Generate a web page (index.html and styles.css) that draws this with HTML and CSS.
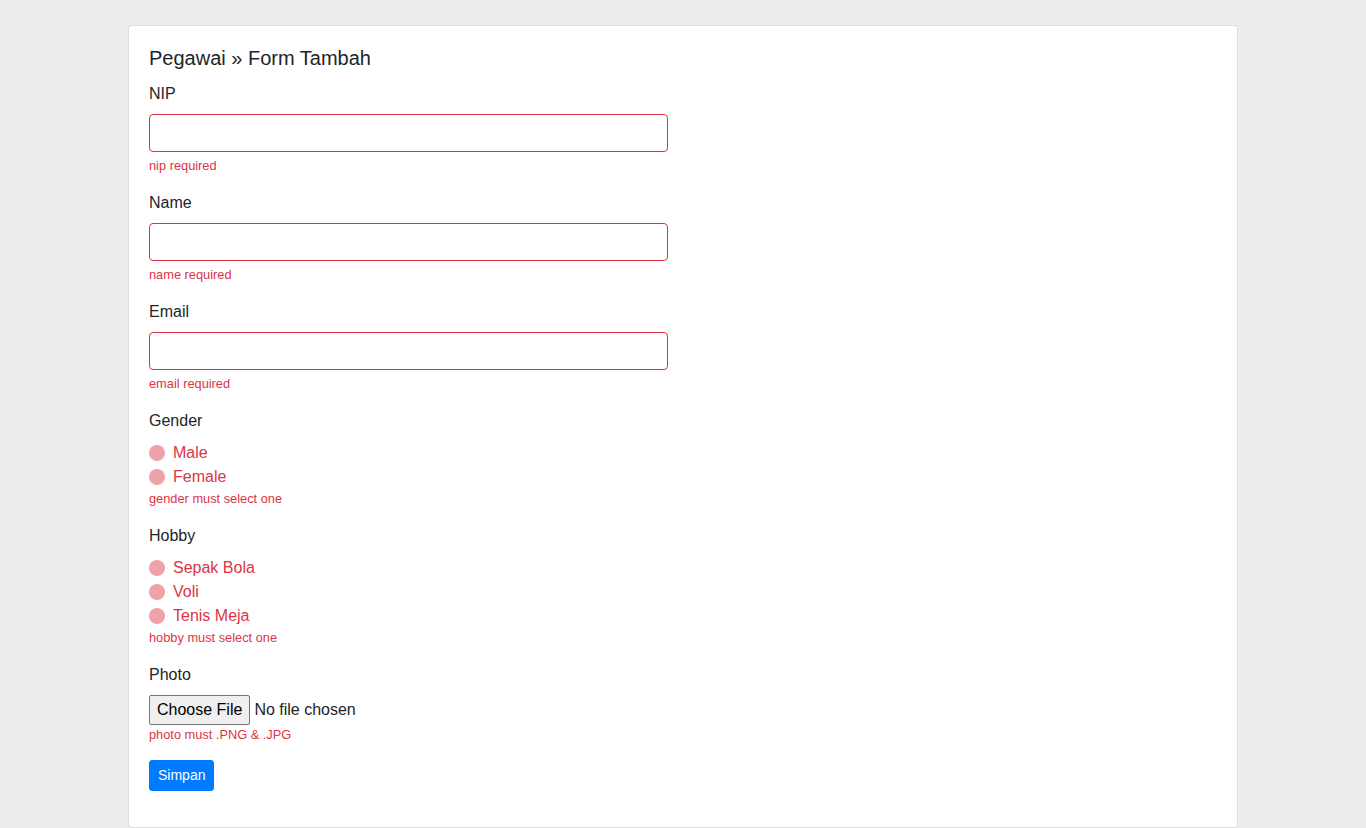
FILE: index.html
```html
<!DOCTYPE html>
<html lang="id">
<head>
<meta charset="utf-8">
<title>Pegawai » Form Tambah</title>
<link rel="stylesheet" href="styles.css">
</head>
<body>
<div class="container">
  <div class="card">
    <div class="card-body">
      <h5 class="card-title">Pegawai » Form Tambah</h5>
      <form class="form" onsubmit="return false">
        <div class="form-group">
          <label class="label" for="nip">NIP</label>
          <div class="col-half"><input id="nip" class="form-control is-invalid" type="text"></div>
          <div class="invalid-feedback">nip required</div>
        </div>
        <div class="form-group">
          <label class="label" for="name">Name</label>
          <div class="col-half"><input id="name" class="form-control is-invalid" type="text"></div>
          <div class="invalid-feedback">name required</div>
        </div>
        <div class="form-group">
          <label class="label" for="email">Email</label>
          <div class="col-half"><input id="email" class="form-control is-invalid" type="text"></div>
          <div class="invalid-feedback">email required</div>
        </div>
        <div class="form-group">
          <div class="label">Gender</div>
          <label class="custom-control"><span class="dot"></span>Male</label>
          <label class="custom-control"><span class="dot"></span>Female</label>
          <div class="invalid-feedback flush">gender must select one</div>
        </div>
        <div class="form-group">
          <div class="label">Hobby</div>
          <label class="custom-control"><span class="dot"></span>Sepak Bola</label>
          <label class="custom-control"><span class="dot"></span>Voli</label>
          <label class="custom-control"><span class="dot"></span>Tenis Meja</label>
          <div class="invalid-feedback flush">hobby must select one</div>
        </div>
        <div class="form-group">
          <label class="label" for="photo">Photo</label>
          <input id="photo" class="form-control-file" type="file">
          <div class="invalid-feedback flush">photo must .PNG &amp; .JPG</div>
        </div>
        <div class="form-group">
          <button class="btn" type="submit">Simpan</button>
        </div>
      </form>
    </div>
  </div>
</div>
</body>
</html>
```
FILE: styles.css
```css
* { box-sizing: border-box; }
html, body { margin: 0; padding: 0; }
body {
  background: #ededed;
  font-family: "Liberation Sans", Arial, sans-serif;
  font-size: 16px;
  line-height: 1.5;
  color: #212529;
}
.container {
  width: 1140px;
  margin: 0 auto;
  padding: 25px 15px 0;
}
.card {
  background: #fff;
  border: 1px solid rgba(0,0,0,.125);
  border-radius: 4px;
}
.card-body { padding: 20px; }
.card-title {
  margin: 0 0 12px;
  font-size: 20px;
  font-weight: 500;
  line-height: 1.2;
}
.form-group { margin-bottom: 16px; }
.label {
  display: block;
  margin-bottom: 8px;
}
.col-half { width: 519px; }
.form-control {
  display: block;
  width: 100%;
  height: 38px;
  padding: 6px 12px;
  font: inherit;
  border: 1px solid #ced4da;
  border-radius: 4px;
  background: #fff;
  outline: none;
}
.form-control.is-invalid { border-color: #dc3545; }
.invalid-feedback {
  margin-top: 4px;
  font-size: 12.8px;
  line-height: 19px;
  color: #dc3545;
}
.invalid-feedback.flush { margin-top: 0; }
.custom-control {
  display: flex;
  align-items: flex-start;
  min-height: 24px;
  color: #dc3545;
}
.dot {
  width: 16px;
  height: 16px;
  margin: 4px 8px 0 0;
  border-radius: 50%;
  background: #efa2a9;
  flex-shrink: 0;
}
.form-control-file {
  display: block;
  width: 100%;
  font-family: "Liberation Sans", Arial, sans-serif;
  font-size: 16px;
  color: #212529;
}
.form-control-file::file-selector-button {
  padding: 5px 7px;
  font: inherit;
  background: #efefef;
  border: 1px solid #767676;
  border-radius: 2px;
  margin-right: 4px;
}
.btn {
  display: inline-block;
  padding: 4px 8px;
  font-family: inherit;
  font-size: 14px;
  line-height: 1.5;
  color: #fff;
  background: #007bff;
  border: 1px solid #007bff;
  border-radius: 3px;
  cursor: pointer;
}
```
